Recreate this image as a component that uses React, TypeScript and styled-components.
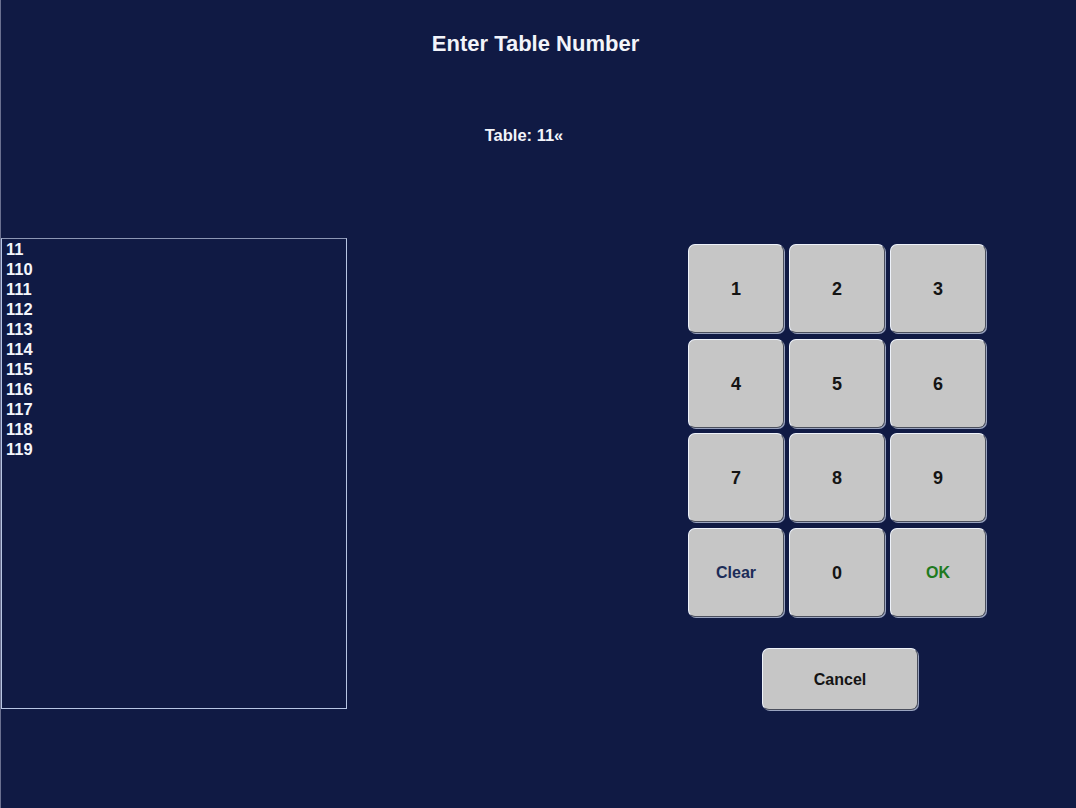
import React, { useState } from 'react';
import styled, { createGlobalStyle } from 'styled-components';

interface IKeyProps {
    tone?: 'default' | 'clear' | 'ok';
}

const tables = ['11', '110', '111', '112', '113', '114', '115', '116', '117', '118', '119'];

const keys: { label: string; tone?: 'default' | 'clear' | 'ok' }[] = [
    { label: '1' },
    { label: '2' },
    { label: '3' },
    { label: '4' },
    { label: '5' },
    { label: '6' },
    { label: '7' },
    { label: '8' },
    { label: '9' },
    { label: 'Clear', tone: 'clear' },
    { label: '0' },
    { label: 'OK', tone: 'ok' },
];

const App: React.FC = () => {
    const [value, setValue] = useState('11');

    const handleKey = (label: string) => {
        if (label === 'Clear') {
            setValue('');
        } else if (label !== 'OK') {
            setValue(value + label);
        }
    };

    return (
        <Page>
            <GlobalStyle />
            <Title>Enter Table Number</Title>
            <TableLabel>Table: {value}«</TableLabel>
            <Body>
                <TableList>
                    {tables.map((t) => (
                        <TableItem key={t}>{t}</TableItem>
                    ))}
                </TableList>
                <KeypadColumn>
                    <Keypad>
                        {keys.map((k) => (
                            <Key key={k.label} tone={k.tone} onClick={() => handleKey(k.label)}>
                                {k.label}
                            </Key>
                        ))}
                    </Keypad>
                    <CancelButton>Cancel</CancelButton>
                </KeypadColumn>
            </Body>
        </Page>
    );
};

const GlobalStyle = createGlobalStyle`
    html, body {
        margin: 0;
        padding: 0;
        background-color: #101a44;
    }
`;

const Page = styled.div`
    display: flex;
    flex-direction: column;

    width: 1076px;
    height: 808px;
    box-sizing: border-box;

    padding-top: 31px;

    background-color: #101a44;
    border-left: 1px solid #6a7090;

    font-family: 'Liberation Sans', Arial, sans-serif;
    font-weight: bold;
    color: #f2f4fa;
`;

const Title = styled.div`
    font-size: 22px;
    line-height: 26px;
    text-align: center;
    padding-right: 6px;
`;

const TableLabel = styled.div`
    margin-top: 68px;
    padding-right: 29px;

    font-size: 16.5px;
    line-height: 20px;
    text-align: center;
`;

const Body = styled.div`
    display: flex;
    align-items: flex-start;

    margin-top: 93px;
`;

const TableList = styled.div`
    display: flex;
    flex-direction: column;

    width: 346px;
    height: 471px;
    box-sizing: border-box;

    padding-left: 4px;

    border: 1px solid #b8c6e4;
    border-top-color: #8c96b4;
`;

const TableItem = styled.div`
    font-size: 16.5px;
    line-height: 20px;
    color: #f4f6fc;
`;

const KeypadColumn = styled.div`
    display: flex;
    flex-direction: column;
    align-items: center;

    margin-left: 341px;
    margin-top: 6px;
`;

const Keypad = styled.div`
    display: grid;
    grid-template-columns: repeat(3, 96px);
    grid-template-rows: 89px 89px 89px 89px;
    column-gap: 5px;
    row-gap: 5.5px;
`;

const buttonBase = `
    display: flex;
    justify-content: center;
    align-items: center;

    box-sizing: border-box;
    padding: 2px 0 0;

    background-color: #c6c6c6;
    border: 1px solid;
    border-color: #eef2fa #4a4e5c #4a4e5c #eef2fa;
    border-radius: 7px;
    box-shadow: 1px 1px 0 #9aa4c0;

    font-family: 'Liberation Sans', Arial, sans-serif;
    font-weight: bold;

    cursor: pointer;
`;

const Key = styled.button<IKeyProps>`
    ${buttonBase}

    font-size: ${(props) => (props.tone === 'clear' || props.tone === 'ok' ? '16px' : '18px')};
    color: ${(props) =>
        props.tone === 'clear' ? '#1c2c58' : props.tone === 'ok' ? '#1e7a1e' : '#141414'};
`;

const CancelButton = styled.button`
    ${buttonBase}

    width: 156px;
    height: 62px;
    margin-top: 31px;
    margin-left: 6px;

    font-size: 16px;
    color: #141414;
`;

export default App;
